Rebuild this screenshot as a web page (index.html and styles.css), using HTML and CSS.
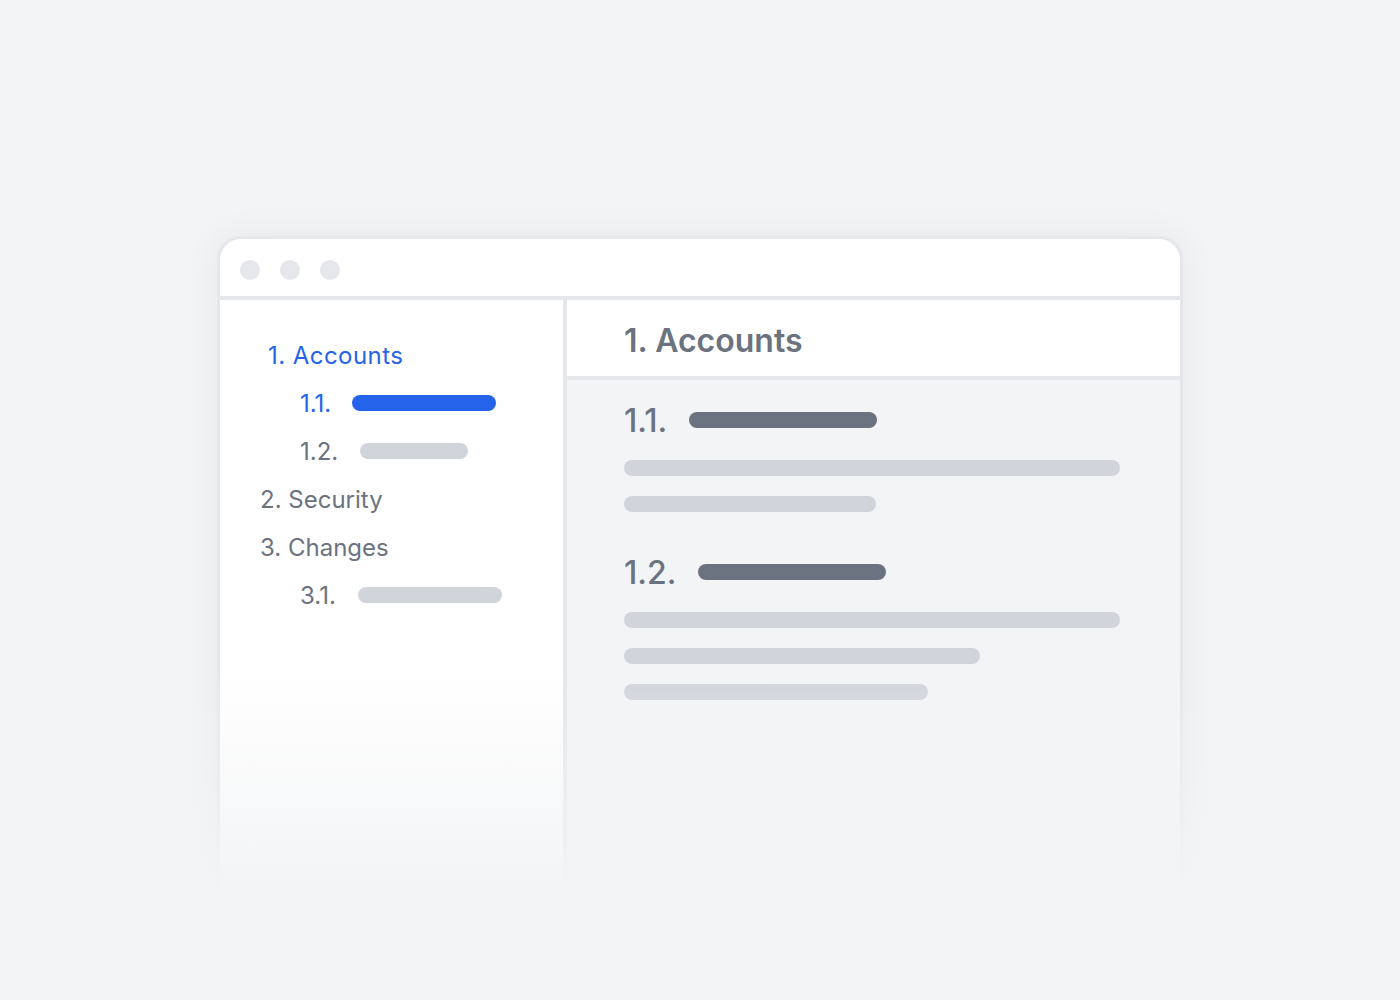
FILE: index.html
```html
<!DOCTYPE html>
<html lang="en">
<head>
<meta charset="utf-8">
<title>Table of contents</title>
<link rel="stylesheet" href="styles.css">
</head>
<body>
<div class="stage">
  <div class="window">
    <div class="titlebar">
      <span class="dot"></span>
      <span class="dot"></span>
      <span class="dot"></span>
    </div>
    <div class="body">
      <nav class="sidebar">
        <div class="nav-item active">1. Accounts</div>
        <div class="nav-sub active"><span class="num">1.1.</span><span class="bar bar-blue"></span></div>
        <div class="nav-sub"><span class="num">1.2.</span><span class="bar bar-gray short"></span></div>
        <div class="nav-item">2. Security</div>
        <div class="nav-item">3. Changes</div>
        <div class="nav-sub"><span class="num">3.1.</span><span class="bar bar-gray"></span></div>
      </nav>
      <main class="main">
        <header class="main-header">1. Accounts</header>
        <section class="content">
          <div class="section">
            <div class="sec-head"><span class="sec-num">1.1.</span><span class="head-bar"></span></div>
            <div class="line w496"></div>
            <div class="line w252"></div>
          </div>
          <div class="section">
            <div class="sec-head"><span class="sec-num">1.2.</span><span class="head-bar"></span></div>
            <div class="line w496"></div>
            <div class="line w356"></div>
            <div class="line w304"></div>
          </div>
        </section>
      </main>
    </div>
    <div class="fade"></div>
  </div>
</div>
</body>
</html>
```

FILE: styles.css
```css
* { box-sizing: border-box; }

html, body {
  margin: 0;
  padding: 0;
  background: #f3f4f6;
  font-family: Inter, "Noto Sans", sans-serif;
}

.stage {
  width: 1400px;
  height: 1000px;
  padding-top: 236px;
  padding-left: 217px;
  overflow: hidden;
}

.window {
  position: relative;
  width: 966px;
  height: 664px;
  border: 3px solid #e5e7eb;
  border-bottom: none;
  border-radius: 24px 24px 0 0;
  background: #ffffff;
  box-shadow: 0 0 36px rgba(17, 24, 39, 0.06);
  display: flex;
  flex-direction: column;
}

.titlebar {
  height: 61px;
  padding: 21px 0 0 20px;
  border-bottom: 4px solid #e5e7eb;
  display: flex;
  gap: 20px;
  flex: none;
}

.dot {
  width: 20px;
  height: 20px;
  border-radius: 50%;
  background: #e5e7eb;
}

.body {
  flex: 1;
  display: flex;
}

.sidebar {
  width: 347px;
  flex: none;
  border-right: 4px solid #e5e7eb;
  background: #ffffff;
  padding-top: 31px;
  padding-left: 40px;
  display: flex;
  flex-direction: column;
}

.nav-item {
  height: 48px;
  line-height: 50px;
  font-size: 24px;
  color: #6b7280;
}

.nav-item.active {
  color: #2563eb;
  padding-left: 8px;
  letter-spacing: 0.45px;
}

.nav-sub {
  height: 48px;
  padding-left: 40px;
  display: flex;
  align-items: center;
  gap: 22px;
  font-size: 24px;
  color: #6b7280;
}

.nav-sub.active { color: #2563eb; }
.nav-sub.active .bar { margin-left: -1px; }

.bar {
  height: 16px;
  width: 144px;
  border-radius: 8px;
}

.bar-blue { background: #2563eb; }
.bar-gray { background: #d1d5db; }
.bar.short { width: 108px; }

.main {
  flex: 1;
  background: #f3f4f6;
  display: flex;
  flex-direction: column;
}

.main-header {
  height: 80px;
  background: #ffffff;
  border-bottom: 4px solid #e5e7eb;
  padding-left: 57px;
  line-height: 82px;
  font-size: 32px;
  font-weight: 600;
  color: #6b7280;
}

.content {
  padding: 24px 0 0 57px;
  display: flex;
  flex-direction: column;
  gap: 44px;
}

.section {
  display: flex;
  flex-direction: column;
  gap: 20px;
}

.sec-head {
  height: 32px;
  display: flex;
  align-items: center;
  gap: 22px;
  margin-bottom: 4px;
}

.sec-num {
  font-size: 32px;
  font-weight: 500;
  color: #6b7280;
}

.head-bar {
  width: 188px;
  height: 16px;
  border-radius: 8px;
  background: #6b7280;
}

.line {
  height: 16px;
  border-radius: 8px;
  background: #d1d5db;
}

.w496 { width: 496px; }
.w356 { width: 356px; }
.w304 { width: 304px; }
.w252 { width: 252px; }

.fade {
  position: absolute;
  left: -70px;
  right: -70px;
  bottom: -70px;
  height: 300px;
  background: linear-gradient(to bottom, rgba(243, 244, 246, 0) 0%, rgba(243, 244, 246, 0.55) 42%, #f3f4f6 74%);
  pointer-events: none;
}
```
